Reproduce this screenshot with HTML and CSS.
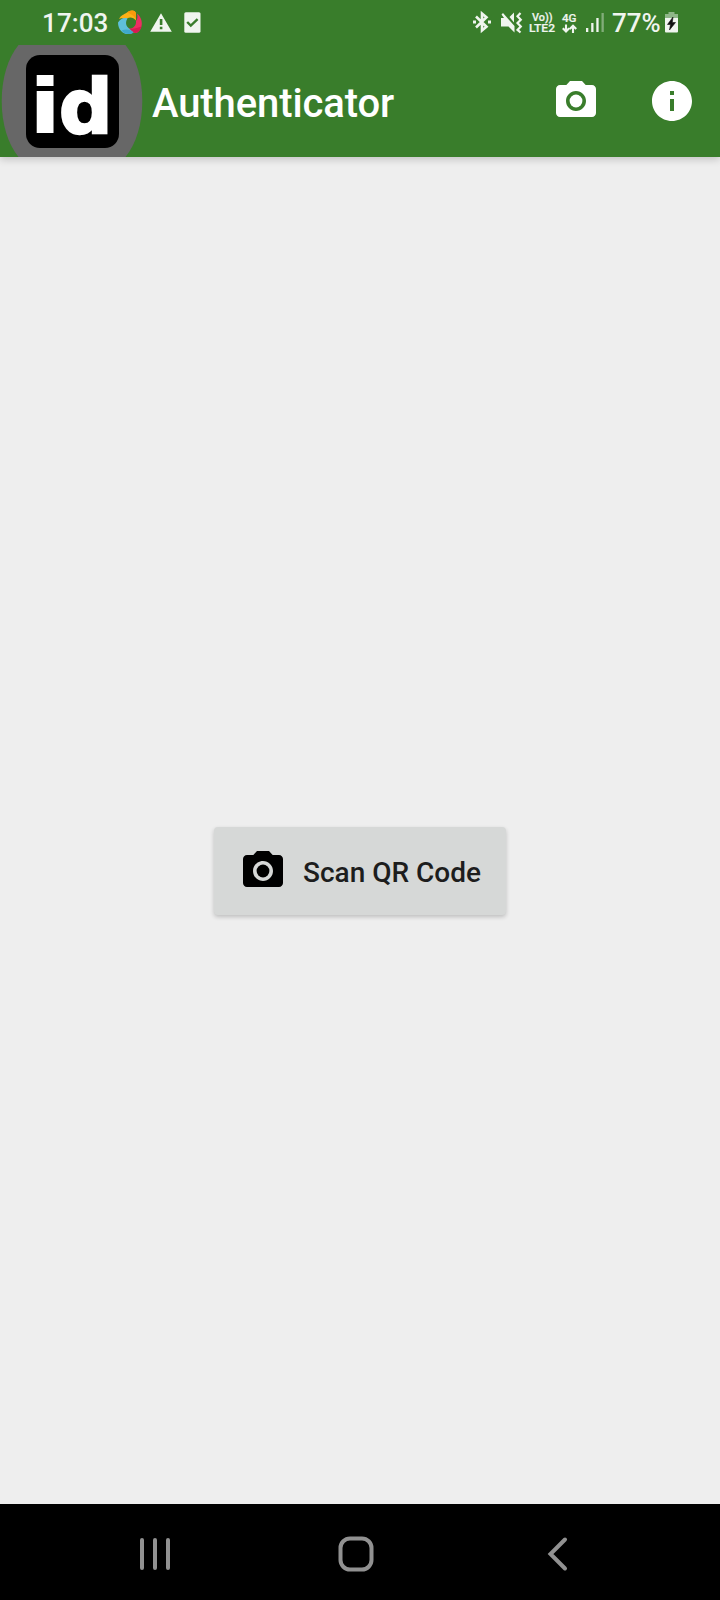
FILE: index.html
```html
<!DOCTYPE html>
<html lang="en">
<head>
<meta charset="utf-8">
<title>Authenticator</title>
<link rel="stylesheet" href="styles.css">
</head>
<body>
<div class="screen">
  <div class="status">
    <span class="clock">17:03</span>
    <svg class="ic-swirl" width="24" height="25" viewBox="0 0 24 25">
      <path d="M1 9C3 5 6 4.500 9 2.500 12-.5 18-.5 18 4v6.500C15 6.500 10 6.500 7 10 5 8 3 8 1 9z" fill="#fcb116"/>
      <path d="M9 2.500C12-.5 18-.5 18 4v6C17 6 13 4 9 2.500z" fill="#f99a0c"/>
      <path d="M19 3.500c4 3 6 9 4.200 14C21.500 22 18 24 15.500 22.500L10.500 18.500c4.500.8 8-3 7.500-7.500 1.500-2 1.800-4.500 1-7.500z" fill="#ee2d62"/>
      <path d="M10.500 18.500c5 .8 9-.5 13-2-1.500 5.500-5 7.500-8 6z" fill="#d81b53"/>
      <path d="M0 12.500c2-3.500 6-5.500 9.500-4-2 3-2 6.500.5 9 1.800 2 3.500 3 5.500 5C8 27 0 21.500 0 12.500z" fill="#5fc0da"/>
      <path d="M3.500 20.500c3-1 5.500-1.500 8-.5 1.500.5 3 1.300 4 2.500-4 2.500-9 2-12-2z" fill="#3fa9cb"/>
    </svg>
    <svg class="ic-warn" width="22" height="19" viewBox="0 0 22 19">
      <path fill-rule="evenodd" d="M11 0.3L21.8 18.7H.2zM9.8 6h2.6v6H9.8zm0 7.8h2.6v2.4H9.8z" fill="#f0f5ef"/>
    </svg>
    <svg class="ic-task" width="17" height="21" viewBox="0 0 17 21">
      <rect x=".3" y=".3" width="16.2" height="20.4" rx="1.5" fill="#f0f5ef"/>
      <path d="M3.2 10l3.6 3.6 6.800-6.400" fill="none" stroke="#397d2b" stroke-width="2.400"/>
    </svg>
    <svg class="ic-bt" width="18" height="22" viewBox="0 0 18 22" fill="none" stroke="#f0f5ef" stroke-width="2.600">
      <path d="M3 5.500l10.500 10.200L9 19.500V2.500l4.500 3.800L3 16.500"/>
      <path d="M0 11h3M15 11h3" stroke-width="2.800"/>
    </svg>
    <svg class="ic-mute" width="22" height="22" viewBox="0 0 22 22">
      <path d="M0 6h3L.5 2.500 2 1l11.500 13V20.500l-6-6H0zM8.500 5L13 .5v10z" fill="#f0f5ef"/>
      <path d="M19.500 1l-3 3.300 3.300 3.400-3.300 3.400 3.300 3.400-3.300 3.400 3 2.600" fill="none" stroke="#f0f5ef" stroke-width="2.200"/>
    </svg>
    <svg class="ic-lte" width="27" height="22" viewBox="0 0 27 22">
      <text class="tiny" x="3" y="8.700" font-size="11" textLength="20.500" lengthAdjust="spacingAndGlyphs">Vo))</text>
      <text class="tiny" x="0" y="19.800" font-size="11" textLength="26" lengthAdjust="spacingAndGlyphs">LTE2</text>
    </svg>
    <svg class="ic-4g" width="16" height="22" viewBox="0 0 16 22">
      <text class="tiny" x="0" y="9.700" font-size="11.500" textLength="14.500" lengthAdjust="spacingAndGlyphs">4G</text>
      <path d="M4 12.500v7M.8 16.200L4 19.500l3.200-3.300M11 21v-7M7.800 17l3.200-3.300 3.200 3.300" fill="none" stroke="#f0f5ef" stroke-width="2.100"/>
    </svg>
    <svg class="ic-signal" width="19" height="20" viewBox="0 0 19 20" fill="#f0f5ef">
      <rect x="0" y="15" width="2.300" height="4"/><rect x="5.200" y="10" width="2.300" height="9"/>
      <rect x="10.300" y="5" width="2.300" height="14"/><rect x="15.500" y="0" width="2.300" height="19" opacity=".4"/>
    </svg>
    <span class="percent">77%</span>
    <svg class="ic-battery" width="13" height="21" viewBox="0 0 13 21">
      <path d="M3.500 0h6v2H13v5H0V2h3.500z" fill="#8fb688"/>
      <path d="M0 6h13v13.500q0 1-1 1H1q-1 0-1-1z" fill="#f0f5ef"/>
      <path d="M8 5l-5.500 7.500h3L4.500 18l6-7.500H7.300z" fill="#111" stroke="#111" stroke-width=".6"/>
    </svg>
  </div>

  <header class="appbar">
    <svg class="logo" width="144" height="112" viewBox="0 0 144 112">
      <path d="M18.500 0H125.500C136 13 142.300 33 142.300 56S136 99 125.500 112H18.500C8 99 1.700 79 1.700 56S8 13 18.500 0z" fill="#676767"/>
      <rect x="26" y="10" width="93" height="93" rx="14"/>
      <text class="mark" transform="translate(28.800 88.300) scale(1.240 1)" x="0" y="0">i</text>
      <text class="mark mark-d" transform="translate(59 87.500) scale(.97 .97)" x="0" y="0">d</text>
    </svg>
    <h1 class="title">Authenticator</h1>
    <svg class="bar-camera" width="40" height="36" viewBox="2 2 20 18">
      <circle cx="12" cy="12" r="3.200" fill="#fff"/>
      <path d="M9 2L7.170 4H4c-1.100 0-2 .9-2 2v12c0 1.100.9 2 2 2h16c1.100 0 2-.9 2-2V6c0-1.100-.9-2-2-2h-3.170L15 2H9zm3 15c-2.760 0-5-2.240-5-5s2.240-5 5-5 5 2.240 5 5-2.240 5-5 5z" fill="#fff"/>
    </svg>
    <svg class="bar-info" width="40" height="40" viewBox="2 2 20 20">
      <path d="M12 2C6.480 2 2 6.480 2 12s4.480 10 10 10 10-4.480 10-10S17.520 2 12 2zm1 15h-2v-6h2v6zm0-8h-2V7h2v2z" fill="#fff"/>
    </svg>
  </header>

  <main class="content">
    <button class="scan">
      <svg width="40" height="36" viewBox="2 2 20 18">
        <circle cx="12" cy="12" r="3.200"/>
        <path d="M9 2L7.170 4H4c-1.100 0-2 .9-2 2v12c0 1.100.9 2 2 2h16c1.100 0 2-.9 2-2V6c0-1.100-.9-2-2-2h-3.170L15 2H9zm3 15c-2.760 0-5-2.240-5-5s2.240-5 5-5 5 2.240 5 5-2.240 5-5 5z"/>
      </svg>
      <span>Scan QR Code</span>
    </button>
  </main>

  <nav class="navbar">
    <svg class="nav-recents" width="32" height="34" viewBox="0 0 32 34" stroke="#919191" stroke-width="4" stroke-linecap="round">
      <path d="M3 3v28M16 3v28M29 3v28"/>
    </svg>
    <svg class="nav-home" width="36" height="36" viewBox="0 0 36 36">
      <rect x="2.500" y="2.500" width="31" height="31" rx="9.500" fill="none" stroke="#919191" stroke-width="4"/>
    </svg>
    <svg class="nav-back" width="20" height="34" viewBox="0 0 20 34">
      <path d="M18 2.500L3.500 17l14.500 14.500" fill="none" stroke="#919191" stroke-width="4" stroke-linecap="round"/>
    </svg>
  </nav>
</div>
</body>
</html>
```
FILE: styles.css
```css
* { box-sizing: border-box; }
body { margin: 0; font-family: Roboto, sans-serif; background: #eee; }
svg { display: block; flex: none; overflow: visible; }
.screen { width: 720px; height: 1600px; display: flex; flex-direction: column; }

.status {
  position: relative;
  z-index: 1;
  height: 45px;
  flex: none;
  display: flex;
  align-items: flex-start;
  background: #397d2b;
  color: #f0f5ef;
  font-size: 26px;
  font-weight: 500;
  line-height: 30px;
}
.clock { width: 76px; margin: 8px 0 0 42px; white-space: nowrap; letter-spacing: .1px; }
.ic-swirl { margin-top: 10px; }
.ic-warn { margin: 13px 0 0 8px; }
.ic-task { margin: 12px 0 0 12px; }
.ic-bt { margin: 11px 0 0 272px; }
.ic-mute { margin: 12px 0 0 10px; }
.ic-lte { margin: 12px 0 0 6px; }
.ic-4g { margin: 12px 0 0 6px; }
.ic-signal { margin: 13px 0 0 8px; }
.percent { width: 53px; margin: 8px 0 0 7px; white-space: nowrap; }
.ic-battery { margin: 12px 0 0 0; }
.tiny { font-family: Roboto, sans-serif; font-weight: 500; fill: #f0f5ef; stroke: #f0f5ef; stroke-width: .2px; }

.appbar {
  position: relative;
  height: 112px;
  flex: none;
  display: flex;
  align-items: flex-start;
  background: #397d2b;
  box-shadow: 0 2px 8px rgba(0, 0, 0, .2);
}
.mark { font-family: "DejaVu Sans", sans-serif; font-weight: 700; font-size: 77px; fill: #fff; }
.mark-d { stroke: #fff; stroke-width: 2.5px; }
.title {
  width: 404px;
  margin: 36px 0 0 8px;
  color: #fff;
  font-size: 40px;
  font-weight: 500;
  line-height: 46px;
  letter-spacing: -.1px;
}
.bar-camera { margin-top: 36px; }
.bar-info { margin: 36px 0 0 56px; }

.content {
  flex: 1;
  display: flex;
  justify-content: center;
  align-items: flex-start;
  padding-top: 670px;
  background: #eee;
}
.scan {
  width: 292px;
  height: 88px;
  display: flex;
  align-items: flex-start;
  padding: 24px 0 0 29px;
  border: 0;
  border-radius: 4px;
  background: #d6d8d7;
  box-shadow: 0 2px 4px rgba(0, 0, 0, .2);
  color: #1d1d1d;
  font: 500 28px/32px Roboto, sans-serif;
  white-space: nowrap;
}
.scan span { margin: 6px 0 0 20px; }

.navbar {
  height: 96px;
  flex: none;
  display: flex;
  align-items: flex-start;
  background: #000;
}
.nav-recents { margin: 33px 0 0 139px; }
.nav-home { margin: 32px 0 0 167px; }
.nav-back { margin: 33px 0 0 173px; }
```
